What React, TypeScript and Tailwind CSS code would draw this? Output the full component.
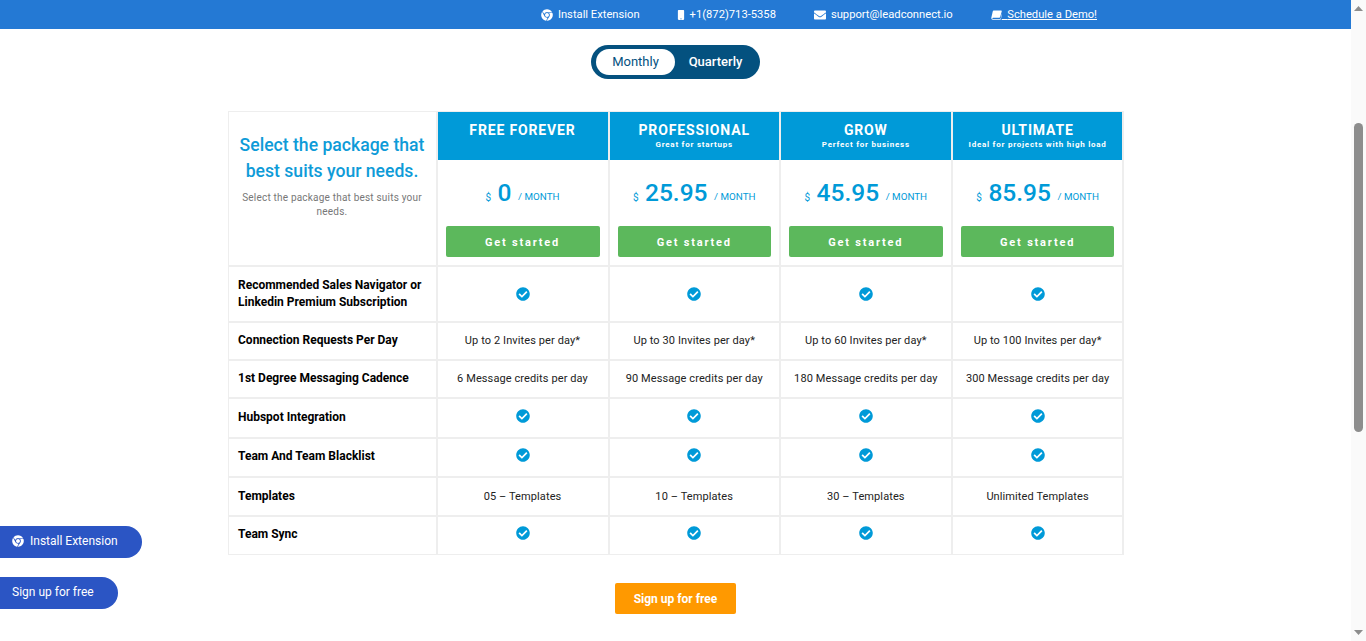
import { FaChrome, FaCheckCircle, FaEnvelope, FaMobile } from "react-icons/fa";

const plans = [
  { name: "FREE FOREVER", note: "", price: "0" },
  { name: "PROFESSIONAL", note: "Great for startups", price: "25.95" },
  { name: "GROW", note: "Perfect for business", price: "45.95" },
  { name: "ULTIMATE", note: "Ideal for projects with high load", price: "85.95" },
];

const rows = [
  { label: "Recommended Sales Navigator or Linkedin Premium Subscription", cells: null, labelCls: "", cellCls: "" },
  { label: "Connection Requests Per Day", cells: ["Up to 2 Invites per day*", "Up to 30 Invites per day*", "Up to 60 Invites per day*", "Up to 100 Invites per day*"], labelCls: "pb-[2px]", cellCls: "" },
  { label: "1st Degree Messaging Cadence", cells: ["6 Message credits per day", "90 Message credits per day", "180 Message credits per day", "300 Message credits per day"], labelCls: "pb-[2px]", cellCls: "" },
  { label: "Hubspot Integration", cells: null, labelCls: "pb-[2px]", cellCls: "pb-[4px]" },
  { label: "Team And Team Blacklist", cells: null, labelCls: "pb-[2px]", cellCls: "pb-[5px]" },
  { label: "Templates", cells: ["05 – Templates", "10 – Templates", "30 – Templates", "Unlimited Templates"], labelCls: "", cellCls: "pt-[2px]" },
  { label: "Team Sync", cells: null, labelCls: "pb-[2px]", cellCls: "pb-[5px]" },
];

function BookIcon() {
  return (
    <svg viewBox="0 0 14 12" className="w-[11px] h-[10px]" fill="#fff">
      <path d="M3.4 0.4h9.6c.6 0 .8.4.7.9l-2 7.4c-.2.6-.6.9-1.2.9H2.6c-.5 0-.9.3-.9.7s.4.7.9.7h8.8c.4 0 .7-.2.8-.5l2-7 .4.4-2.2 7.5c-.2.5-.6.8-1.1.8H2.3C1 11.7.2 10.7.4 9.4L2.2 1.5C2.4.8 2.8.4 3.4.4z" />
    </svg>
  );
}

export default function App() {
  return (
    <div className="flex h-[641px] overflow-hidden bg-white font-['Roboto',sans-serif]">
      <div className="relative w-[1351px] flex flex-col items-center">
        <div className="w-full h-[29px] pt-[2px] bg-[#2479d4] text-white text-[11.2px] flex items-center justify-end gap-[38px] pr-[254px]">
          <span className="flex items-center gap-[5px]"><FaChrome className="text-[12px]" />Install Extension</span>
          <span className="flex items-center gap-[4px] -ml-[2px]"><FaMobile className="text-[10px]" />+1(872)713-5358</span>
          <span className="flex items-center gap-[5px]"><FaEnvelope className="text-[12px]" />support@leadconnect.io</span>
          <span className="flex items-center underline"><BookIcon /><span>{"\u00a0\u00a0"}Schedule a Demo!</span></span>
        </div>

        <div className="mt-[16px] w-[169px] h-[34px] rounded-full bg-[#04517f] flex items-center pl-[5px] text-[13px]">
          <span className="w-[79px] h-[26px] rounded-full bg-white text-[#04517f] flex items-center justify-center">Monthly</span>
          <span className="flex-1 text-white font-medium text-center pr-[4px]">Quarterly</span>
        </div>

        <div className="mt-[32px] w-[896px] border border-[#eee] bg-[#eee] grid grid-cols-[207px_170px_169.4px_169.8px_169.8px] grid-rows-[153px_54px_36px_36px_38px_37px_37px_37px] gap-[2px]">
          <div className="bg-white text-center px-[2px] pt-[20px]">
            <h1 className="text-[17.6px] leading-[26px] font-medium text-[#0e9bd8]">Select the package that best suits your needs.</h1>
            <p className="mt-[7px] px-[10px] text-[10px] leading-[14px] tracking-[0.2px] text-[#777]">Select the package that best suits your needs.</p>
          </div>
          {plans.map((p) => (
            <div key={p.name} className="bg-white flex flex-col">
              <div className="h-[48px] bg-[#009ad8] text-white text-center">
                <div className="pt-[10px] text-[14px] leading-[16px] font-bold tracking-[0.85px]">{p.name}</div>
                <div className="mt-[2px] text-[8px] leading-[10px] font-bold tracking-[0.75px]">{p.note}</div>
              </div>
              <div className="h-[66px] pt-[2px] flex items-center justify-center gap-[6.5px] text-[#009ad8]">
                <span className="text-[10px] mt-[6px]">$</span>
                <span className="text-[24.5px] font-medium mb-[2px]">{p.price}</span>
                <span className="text-[9.8px] mt-[6px]">/ MONTH</span>
              </div>
              <div className="mx-[8px] h-[31px] pt-[4px] rounded-[2px] bg-[#5cb85c] text-white text-[11px] font-bold tracking-[1.8px] flex items-center justify-center">Get started</div>
            </div>
          ))}
          {rows.map((r) => (
            <div key={r.label} className="contents">
              <div className={`bg-white flex items-center pl-[9.5px] pr-[8px] text-[12px] leading-[17px] font-bold text-black ${r.labelCls}`}>{r.label}</div>
              {[0, 1, 2, 3].map((i) => (
                <div key={i} className={`bg-white flex items-center justify-center text-[11px] tracking-[0.1px] text-[#222] ${r.cellCls}`}>
                  {r.cells ? r.cells[i] : <FaCheckCircle className="text-[14px] text-[#009ad8]" />}
                </div>
              ))}
            </div>
          ))}
        </div>

        <button className="mt-[28px] w-[121px] h-[31px] rounded-[2px] bg-[#ff9900] text-white text-[12px] font-bold">Sign up for free</button>

        <div className="absolute left-0 top-[526px] w-[142px] h-[32px] pb-[2px] rounded-r-full bg-[#2b55c4] text-white text-[12px] flex items-center gap-[6px] pl-[12px]">
          <FaChrome className="text-[12px]" />Install Extension
        </div>
        <div className="absolute left-0 top-[577px] w-[118px] h-[32px] pb-[2px] rounded-r-full bg-[#2b55c4] text-white text-[12px] flex items-center pl-[12px]">Sign up for free</div>
      </div>

      <div className="w-[15px] bg-[#fafafa] flex flex-col items-center">
        <svg viewBox="0 0 9 5" className="w-[9px] h-[5px] mt-[6px] fill-[#8d8d8d]"><path d="M4.5 0L9 5H0z" /></svg>
        <div className="mt-[112px] w-[9px] h-[309px] rounded-t-full rounded-b-full bg-[#8d8d8d]" />
        <div className="flex-1" />
        <svg viewBox="0 0 9 5" className="w-[9px] h-[5px] mb-[6px] fill-[#8d8d8d]"><path d="M0 0h9L4.5 5z" /></svg>
      </div>
    </div>
  );
}
